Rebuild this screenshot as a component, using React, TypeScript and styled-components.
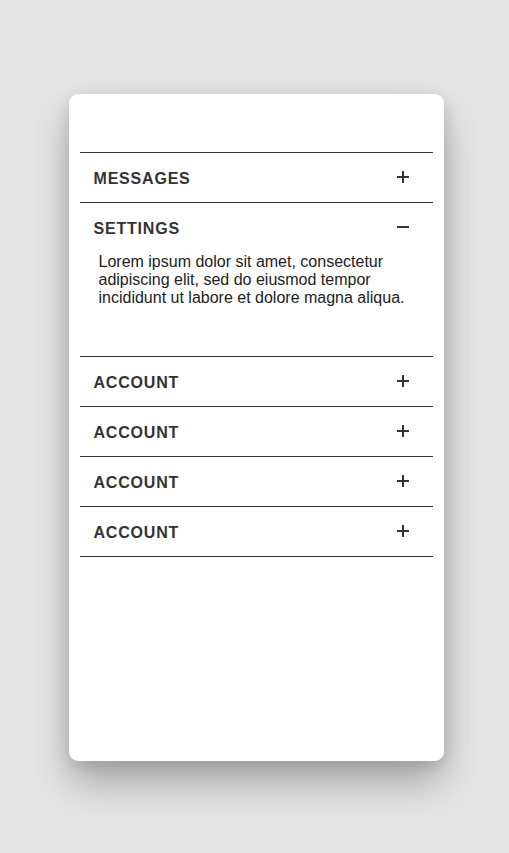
import React, { useState } from "react";
import styled, { createGlobalStyle } from "styled-components";

const Global = createGlobalStyle`
  html, body { margin: 0; padding: 0; background: #e6e6e6; }
  body { font-family: "Liberation Sans", Arial, sans-serif; }
`;

const Page = styled.div`
  width: 509px;
  height: 853px;
  display: flex;
  justify-content: center;
  padding-top: 94px;
  box-sizing: border-box;
  padding-left: 3px;
`;

const Card = styled.div`
  width: 375px;
  height: 667px;
  background: #fff;
  border-radius: 9px;
  box-shadow: 0 22px 40px rgba(0, 0, 0, 0.28), 0 4px 16px rgba(0, 0, 0, 0.12);
  padding: 58px 11px 0;
  box-sizing: border-box;
`;

const List = styled.div`
  border-top: 1px solid #333;
  display: flex;
  flex-direction: column;
`;

const Item = styled.div`
  border-bottom: 1px solid #333;
`;

const Header = styled.button`
  all: unset;
  box-sizing: border-box;
  width: 100%;
  height: 49px;
  display: flex;
  align-items: center;
  justify-content: space-between;
  padding: 2px 24px 0 14px;
  cursor: pointer;
`;

const Title = styled.span`
  font-family: "Liberation Sans", Arial, sans-serif;
  font-weight: 700;
  font-size: 16px;
  letter-spacing: 0.8px;
  color: #333;
`;

const IconBox = styled.span`
  display: flex;
  margin-top: -3px;
`;

const Body = styled.p`
  margin: 0;
  padding: 1px 20px 49px 19px;
  font-family: "Liberation Sans", Arial, sans-serif;
  font-size: 16px;
  line-height: 18px;
  color: #222;
`;

const Icon = ({ open }: { open: boolean }) => (
  <IconBox>
    <svg width="12" height="12" viewBox="0 0 12 12">
      <path d="M0 6h12" stroke="#333" strokeWidth="2" />
      {!open && <path d="M6 0v12" stroke="#333" strokeWidth="2" />}
    </svg>
  </IconBox>
);

const items = [
  { title: "MESSAGES" },
  { title: "SETTINGS" },
  { title: "ACCOUNT" },
  { title: "ACCOUNT" },
  { title: "ACCOUNT" },
  { title: "ACCOUNT" },
];

export default function App() {
  const [open, setOpen] = useState(1);
  return (
    <>
      <Global />
      <Page>
        <Card>
          <List>
            {items.map((it, i) => (
              <Item key={i}>
                <Header onClick={() => setOpen(open === i ? -1 : i)}>
                  <Title>{it.title}</Title>
                  <Icon open={open === i} />
                </Header>
                {open === i && (
                  <Body>
                    Lorem ipsum dolor sit amet, consectetur adipiscing elit, sed do eiusmod tempor incididunt ut labore et dolore magna aliqua.
                  </Body>
                )}
              </Item>
            ))}
          </List>
        </Card>
      </Page>
    </>
  );
}
